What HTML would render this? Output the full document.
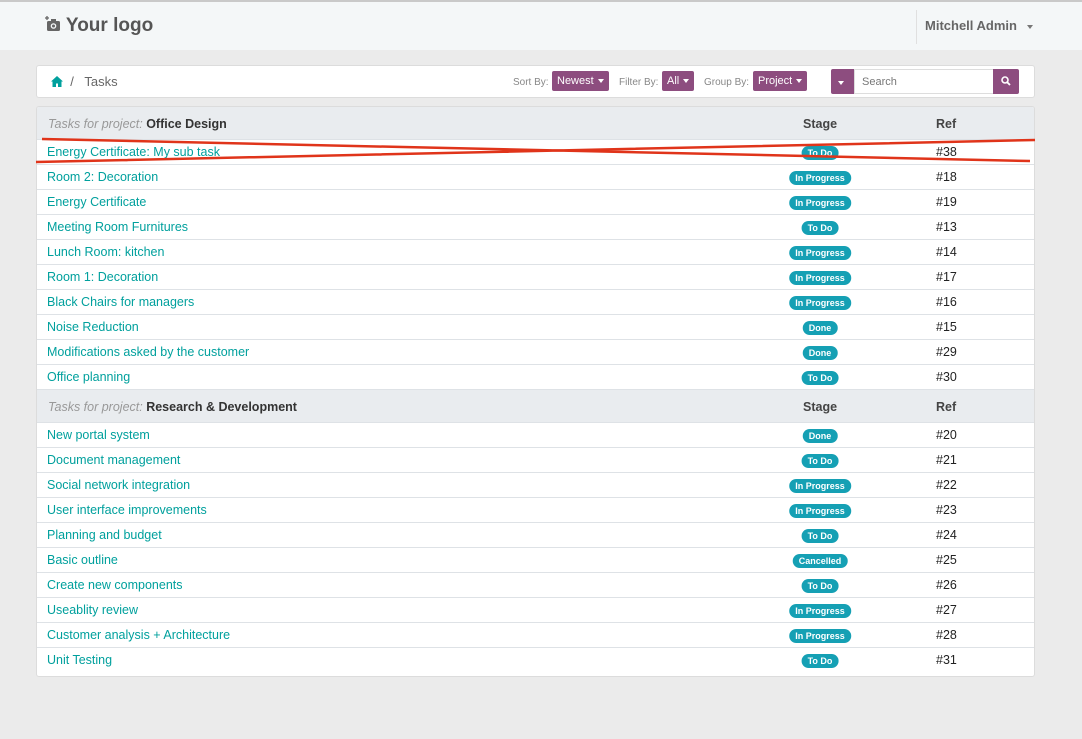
<!DOCTYPE html>
<html><head><style>
*{box-sizing:border-box;margin:0;padding:0}
body{width:1082px;height:739px;background:#ebebeb;font-family:"Liberation Sans",sans-serif;position:relative;overflow:hidden}
.nav{position:absolute;left:0;top:0;width:1082px;height:50px;background:#f4f7f8;border-top:2px solid #c9c9c9}
.logo{position:absolute;left:45px;top:13px;font-size:19px;font-weight:bold;color:#555}
.user{position:absolute;left:916px;top:8px;height:34px;border-left:1px solid #e0e0e0;padding-left:8px;padding-top:8px;font-size:13px;font-weight:bold;color:#666}
.card{position:absolute;left:36px;width:999px;background:#fff;border:1px solid #dcdcdc;border-radius:3px}
.bc{top:65px;height:33px}
.bc .t{position:absolute;left:14px;top:8px;font-size:13px;color:#666}
.lbl{position:absolute;top:11px;font-size:10px;color:#888}
.btn{position:absolute;top:5px;height:20px;line-height:20px;background:#8d4d7f;color:#fff;font-size:11px;border-radius:2px;padding:0 5px}
.car{display:inline-block;border-left:3px solid transparent;border-right:3px solid transparent;border-top:4px solid #fff;vertical-align:middle;margin-left:4px}
.tbl{top:106px;height:571px;overflow:hidden}
.hdr{height:33px;background:#e9ecef;position:relative;border-bottom:1px solid #dee2e6}
.row{height:25px;position:relative;border-bottom:1px solid #dee2e6}
.name{position:absolute;left:10px;top:5px;font-size:12.5px;color:#00a09d}
.hn{position:absolute;left:11px;top:10px;font-size:12.5px;color:#333;font-weight:bold}
.hn i{color:#999;font-weight:normal}
.hs{position:absolute;left:766px;top:10px;font-size:12.5px;font-weight:bold;color:#444}
.hr{position:absolute;left:899px;top:10px;font-size:12.5px;font-weight:bold;color:#444}
.st{position:absolute;left:783px;width:0;top:6px}
.b{position:absolute;transform:translateX(-50%);white-space:nowrap;background:#15a0b4;color:#fff;font-size:9px;font-weight:bold;border-radius:7px;padding:2px 6px;line-height:10px}
.ref{position:absolute;left:899px;top:5px;font-size:12.5px;color:#222}
</style></head><body>
<div class="nav">
<div class="logo"><svg width="16" height="16" viewBox="0 0 16 16" style="vertical-align:-1px"><rect x="2" y="5" width="13" height="10" rx="1.5" fill="#666"/><rect x="6" y="3" width="5" height="3" fill="#666"/><circle cx="8.5" cy="10" r="2.8" fill="#f4f7f8"/><circle cx="8.5" cy="10" r="1.5" fill="#666"/><path d="M2 0v4M0 2h4" stroke="#666" stroke-width="1.3"/></svg> Your logo</div>
<div class="user">Mitchell Admin <span class="car" style="border-top-color:#777;margin-left:6px"></span></div>
</div>
<div class="card bc">
<div class="t"><svg width="12" height="11" viewBox="0 0 12 11" style="vertical-align:-1px"><path d="M6 0L0 5.5h1.5V11h3.5V7.5h2V11h3.5V5.5H12z" fill="#00a09d"/></svg> &nbsp;/ &nbsp; Tasks</div>
<span class="lbl" style="left:476px">Sort By:</span><span class="btn" style="left:515px">Newest<span class="car"></span></span>
<span class="lbl" style="left:582px">Filter By:</span><span class="btn" style="left:625px">All<span class="car"></span></span>
<span class="lbl" style="left:667px">Group By:</span><span class="btn" style="left:716px">Project<span class="car"></span></span>
<span style="position:absolute;left:794px;top:3px;width:23px;height:25px;background:#8d4d7f;border-radius:2px 0 0 2px"><span class="car" style="margin:10px 0 0 7px"></span></span>
<span style="position:absolute;left:817px;top:3px;width:140px;height:25px;border:1px solid #ddd;font-size:11px;color:#777;padding:6px 7px">Search</span>
<span style="position:absolute;left:956px;top:3px;width:26px;height:25px;background:#8d4d7f;border-radius:0 2px 2px 0"><svg width="10" height="10" viewBox="0 0 10 10" style="margin:7px 0 0 8px"><circle cx="4" cy="4" r="3" stroke="#fff" stroke-width="1.6" fill="none"/><path d="M6.2 6.2L9 9" stroke="#fff" stroke-width="1.8"/></svg></span>
</div>
<div class="card tbl">
<div class="hdr"><span class="hn"><i>Tasks for project:</i> Office Design</span><span class="hs">Stage</span><span class="hr">Ref</span></div>
<div class="row"><span class="name">Energy Certificate: My sub task</span><span class="st"><span class="b">To Do</span></span><span class="ref">#38</span></div>
<div class="row"><span class="name">Room 2: Decoration</span><span class="st"><span class="b">In Progress</span></span><span class="ref">#18</span></div>
<div class="row"><span class="name">Energy Certificate</span><span class="st"><span class="b">In Progress</span></span><span class="ref">#19</span></div>
<div class="row"><span class="name">Meeting Room Furnitures</span><span class="st"><span class="b">To Do</span></span><span class="ref">#13</span></div>
<div class="row"><span class="name">Lunch Room: kitchen</span><span class="st"><span class="b">In Progress</span></span><span class="ref">#14</span></div>
<div class="row"><span class="name">Room 1: Decoration</span><span class="st"><span class="b">In Progress</span></span><span class="ref">#17</span></div>
<div class="row"><span class="name">Black Chairs for managers</span><span class="st"><span class="b">In Progress</span></span><span class="ref">#16</span></div>
<div class="row"><span class="name">Noise Reduction</span><span class="st"><span class="b">Done</span></span><span class="ref">#15</span></div>
<div class="row"><span class="name">Modifications asked by the customer</span><span class="st"><span class="b">Done</span></span><span class="ref">#29</span></div>
<div class="row"><span class="name">Office planning</span><span class="st"><span class="b">To Do</span></span><span class="ref">#30</span></div>
<div class="hdr"><span class="hn"><i>Tasks for project:</i> Research &amp; Development</span><span class="hs">Stage</span><span class="hr">Ref</span></div>
<div class="row"><span class="name">New portal system</span><span class="st"><span class="b">Done</span></span><span class="ref">#20</span></div>
<div class="row"><span class="name">Document management</span><span class="st"><span class="b">To Do</span></span><span class="ref">#21</span></div>
<div class="row"><span class="name">Social network integration</span><span class="st"><span class="b">In Progress</span></span><span class="ref">#22</span></div>
<div class="row"><span class="name">User interface improvements</span><span class="st"><span class="b">In Progress</span></span><span class="ref">#23</span></div>
<div class="row"><span class="name">Planning and budget</span><span class="st"><span class="b">To Do</span></span><span class="ref">#24</span></div>
<div class="row"><span class="name">Basic outline</span><span class="st"><span class="b">Cancelled</span></span><span class="ref">#25</span></div>
<div class="row"><span class="name">Create new components</span><span class="st"><span class="b">To Do</span></span><span class="ref">#26</span></div>
<div class="row"><span class="name">Useablity review</span><span class="st"><span class="b">In Progress</span></span><span class="ref">#27</span></div>
<div class="row"><span class="name">Customer analysis + Architecture</span><span class="st"><span class="b">In Progress</span></span><span class="ref">#28</span></div>
<div class="row" style="border-bottom:none"><span class="name">Unit Testing</span><span class="st"><span class="b">To Do</span></span><span class="ref">#31</span></div>
</div>
<svg width="1082" height="739" style="position:absolute;left:0;top:0;pointer-events:none"><path d="M42 139L1030 161M36 162L1035 140" stroke="#e0341a" stroke-width="2.5" fill="none"/></svg>
</body></html>
